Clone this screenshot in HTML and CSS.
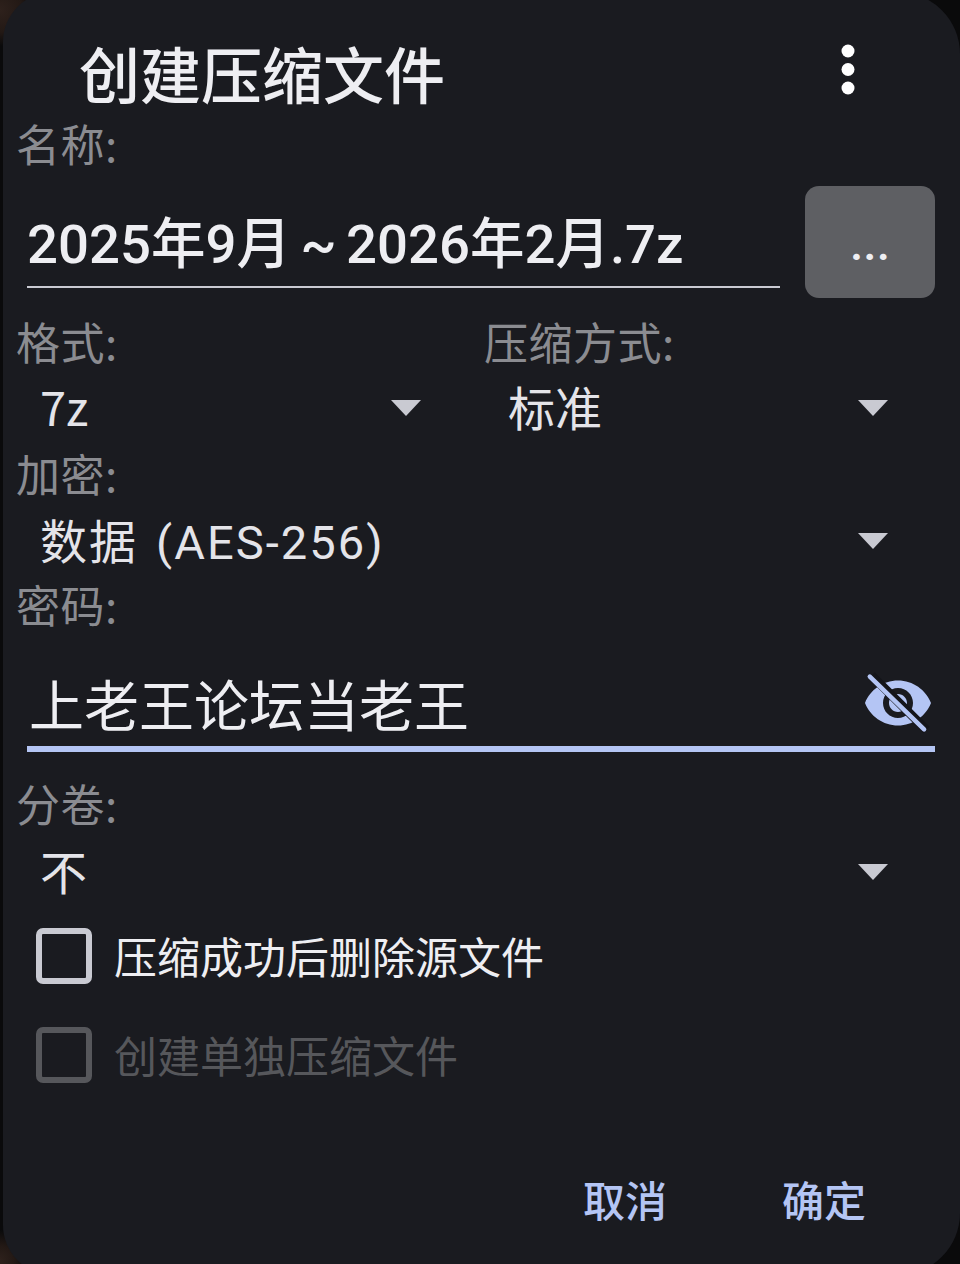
FILE: index.html
```html
<!DOCTYPE html>
<html lang="zh-CN">
<head>
  <meta charset="UTF-8">
  <meta name="viewport" content="width=device-width, initial-scale=1.0">
  <title>创建压缩文件</title>
  <link rel="stylesheet" href="styles.css">
</head>
<body>

  <div class="dialog">
    <div class="title-row">
      <h2>创建压缩文件</h2>
      <svg class="more-icon" width="14" height="52" viewBox="0 0 14 52">
        <circle cx="7" cy="7" r="6.5" fill="#fff"/>
        <circle cx="7" cy="25.5" r="6.5" fill="#fff"/>
        <circle cx="7" cy="44" r="6.5" fill="#fff"/>
      </svg>
    </div>

    <div class="label">名称:</div>
    <div class="name-row">
      <div class="name-input">2025年9月 ~ 2026年2月.7z</div>
      <button class="browse-btn">...</button>
    </div>

    <div class="two-cols">
      <div>
        <div class="label">格式:</div>
        <div class="select"><span>7z</span><i class="arrow"></i></div>
      </div>
      <div>
        <div class="label">压缩方式:</div>
        <div class="select"><span>标准</span><i class="arrow"></i></div>
      </div>
    </div>

    <div class="label label-encrypt">加密:</div>
    <div class="select select-encrypt"><span>数据 (AES-256)</span><i class="arrow"></i></div>

    <div class="label label-password">密码:</div>
    <div class="password-input">
      <span>上老王论坛当老王</span>
      <svg class="eye-icon" width="72" height="72" viewBox="0 0 24 24">
        <path fill="#b4c5f4" d="M12 4.5C7 4.5 2.73 7.61 1 12c1.73 4.39 6 7.5 11 7.5s9.27-3.11 11-7.5c-1.73-4.39-6-7.5-11-7.5zM12 17c-2.76 0-5-2.24-5-5s2.24-5 5-5 5 2.24 5 5-2.24 5-5 5zm0-8c-1.66 0-3 1.34-3 3s1.34 3 3 3 3-1.34 3-3-1.34-3-3-3z"/>
        <path stroke="#14151a" stroke-width="3" d="M3.2 2.8L21.5 21"/>
        <path stroke="#b4c5f4" stroke-width="1.5" stroke-linecap="round" d="M2.6 3.2L20.7 20.8"/>
      </svg>
    </div>

    <div class="label label-split">分卷:</div>
    <div class="select select-split"><span>不</span><i class="arrow"></i></div>

    <div class="check-row">
      <i class="checkbox"></i>
      <span>压缩成功后删除源文件</span>
    </div>
    <div class="check-row disabled">
      <i class="checkbox"></i>
      <span>创建单独压缩文件</span>
    </div>

    <div class="button-group">
      <button>取消</button>
      <button>确定</button>
    </div>
  </div>

</body>
</html>
```

FILE: styles.css
```css
html, body {
  margin: 0;
  height: 1264px;
  overflow: hidden;
}

body {
  font-family: "Noto Sans CJK SC", "Noto Sans", sans-serif;
  background:
    radial-gradient(circle at 0 10px, #2e211c 0, #231915 22px, transparent 36px),
    radial-gradient(circle at 0 1260px, #2e211c 0, #231915 14px, transparent 30px),
    #0a0a0b;
}

.dialog {
  box-sizing: border-box;
  margin-left: 3px;
  margin-top: -8px;
  width: 957px;
  height: 1283px;
  padding: 8px 25px 0 13px;
  background-color: #1a1b20;
  border-radius: 50px 62px 62px 50px;
}

.title-row {
  display: flex;
  justify-content: space-between;
  height: 124px;
}

h2 {
  margin: 0 0 0 63px;
  font-size: 61px;
  font-weight: 500;
  line-height: 146px;
  color: #eeeef2;
}

.more-icon {
  margin: 44px 80px 0 0;
}

.label {
  height: 44px;
  font-size: 44px;
  line-height: 38px;
  letter-spacing: 0.5px;
  color: #8b8c91;
}

.name-row {
  display: flex;
  justify-content: space-between;
  margin-top: 18px;
}

.name-input {
  box-sizing: border-box;
  width: 753px;
  height: 102px;
  margin-left: 11px;
  border-bottom: 2px solid #c9cad2;
  font-family: Roboto, "Noto Sans CJK SC", sans-serif;
  font-size: 54.5px;
  font-weight: 500;
  word-spacing: -4px;
  line-height: 116px;
  color: #eeeef2;
  white-space: nowrap;
}

.browse-btn {
  width: 130px;
  height: 112px;
  padding: 0;
  border: none;
  border-radius: 14px;
  background-color: #5e5f63;
  color: #eeeef2;
  font-family: Roboto, sans-serif;
  font-size: 48px;
  font-weight: 500;
  line-height: 116px;
}

.two-cols {
  display: grid;
  grid-template-columns: 452px 451px;
  gap: 16px;
  margin-top: 24px;
}

.select {
  display: flex;
  justify-content: space-between;
  align-items: center;
  height: 66px;
  margin-top: 9px;
  padding: 0 47px 0 24px;
  font-size: 47px;
  color: #e4e4e9;
}

.select span {
  margin-bottom: 6px;
}

.arrow {
  width: 0;
  height: 0;
  border-left: 15px solid transparent;
  border-right: 15px solid transparent;
  border-top: 16px solid #c9cad2;
}

.label-encrypt {
  margin-top: 13px;
}

.select-encrypt {
  margin-top: 10px;
  font-family: Roboto, "Noto Sans CJK SC", sans-serif;
  letter-spacing: 2.1px;
  word-spacing: 4px;
}

.label-password {
  margin-top: 11px;
}

.password-input {
  display: flex;
  justify-content: space-between;
  align-items: center;
  box-sizing: border-box;
  height: 123px;
  margin-left: 11px;
  padding: 28px 0 0 2px;
  border-bottom: 6px solid #b4c5f4;
  font-size: 55px;
  color: #eeeef2;
}

.eye-icon {
  margin-top: 2px;
  margin-right: 1px;
}

.label-split {
  margin-top: 32px;
}

.select-split {
  margin-top: 11px;
}

.check-row {
  display: flex;
  align-items: center;
  height: 99px;
  padding-left: 20px;
  font-size: 43px;
  color: #eeeef2;
}

.check-row .checkbox {
  margin-top: 2px;
}

.checkbox {
  box-sizing: border-box;
  width: 56px;
  height: 56px;
  margin-right: 22px;
  border: 6px solid #c9cad2;
  border-radius: 7px;
}

.disabled {
  color: #56575b;
}

.disabled .checkbox {
  border-color: #56575b;
}

.button-group {
  display: flex;
  justify-content: flex-end;
  gap: 115px;
  margin-top: 64px;
  padding-right: 69px;
}

.button-group button {
  padding: 0;
  border: none;
  background: none;
  font-family: inherit;
  font-size: 42px;
  font-weight: 500;
  line-height: 64px;
  color: #b4c5f4;
}
```
